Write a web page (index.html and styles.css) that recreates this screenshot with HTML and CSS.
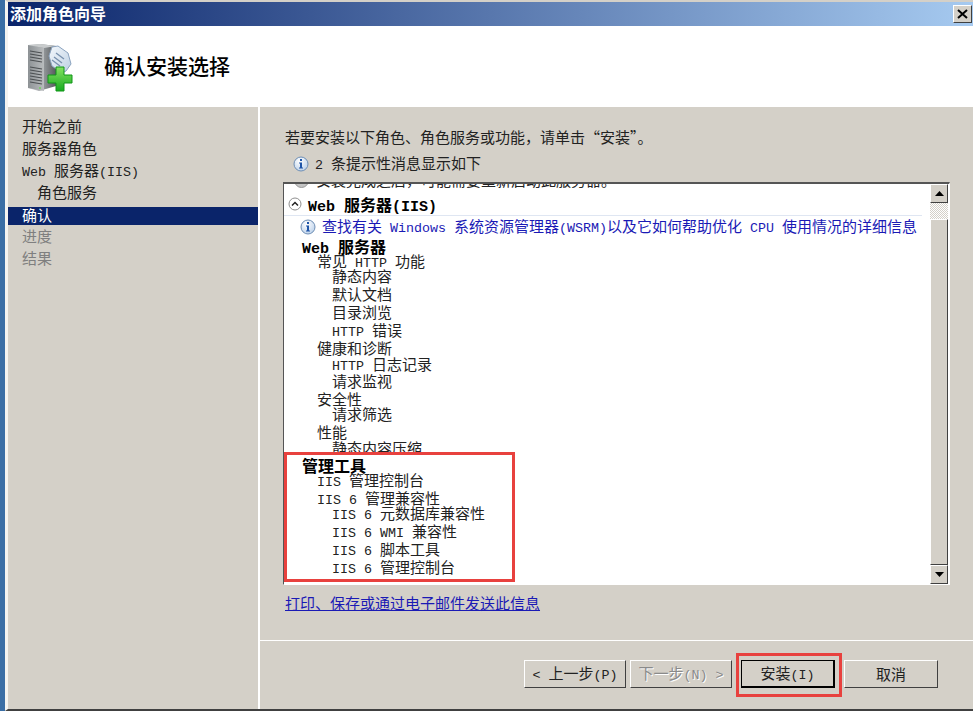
FILE: index.html
```html
<!DOCTYPE html>
<html lang="zh-CN">
<head>
<meta charset="utf-8">
<title>添加角色向导</title>
<link rel="stylesheet" href="styles.css">
</head>
<body>
<div class="window">
  <div class="titlebar">
    <span class="title-text">添加角色向导</span>
    <span class="close"><svg width="11" height="10" viewBox="0 0 11 10"><path d="M1 1l9 8M10 1l-9 8" stroke="#000" stroke-width="2" fill="none"/></svg></span>
  </div>
  <header class="head">
    <svg class="head-icon" width="48" height="50" viewBox="0 0 48 50">
      <defs>
        <linearGradient id="srv" x1="0" x2="1" y1="0" y2="0"><stop offset="0" stop-color="#8d9295"/><stop offset="1" stop-color="#b9bcbe"/></linearGradient>
        <linearGradient id="side" x1="0" x2="1" y1="0" y2="0"><stop offset="0" stop-color="#e1e3e4"/><stop offset=".5" stop-color="#9b9fa2"/><stop offset="1" stop-color="#565a5d"/></linearGradient>
        <linearGradient id="plus" x1="0" x2="0" y1="0" y2="1"><stop offset="0" stop-color="#86e262"/><stop offset="1" stop-color="#17ab1f"/></linearGradient>
        <linearGradient id="tag" x1="0" x2="1" y1="0" y2="1"><stop offset="0" stop-color="#f4f8fc"/><stop offset="1" stop-color="#bccfe3"/></linearGradient>
      </defs>
      <path d="M1 2l12-1 16 2v40l-17 5-11-3z" fill="url(#side)"/>
      <path d="M1 2l12-1 16 2-12 2z" fill="#c9cccd"/>
      <path d="M1 2l16 3v43l-16-3z" fill="url(#srv)"/>
      <path d="M3 8l12 2M3 11l12 2M3 14l12 2M3 17l12 2M3 24l12 2M3 27l12 2M3 30l12 2M3 33l12 2M3 36l12 2M3 39l12 2" stroke="#4c5053" stroke-width="1.100" fill="none"/>
      <circle cx="13" cy="45" r="1" fill="#6fcf5a"/>
      <path d="M22 13l3-9 6-1 10 7 3 11-5 7-4 2-10-7z" fill="url(#tag)" stroke="#8ba3bf"/>
      <path d="M29 10l8 6M27 14l8 6M25 17l8 6" stroke="#7890ae" stroke-width="1.300" fill="none"/>
      <path d="M21 32h8v-8h8v8h8v8h-8v8h-8v-8h-8z" fill="url(#plus)" stroke="#109619"/>
    </svg>
    <h1 class="head-title">确认安装选择</h1>
  </header>
  <div class="body">
    <nav class="steps">
      <div class="step">开始之前</div>
      <div class="step">服务器角色</div>
      <div class="step"><span class="lat">Web </span>服务器<span class="lat">(IIS)</span></div>
      <div class="step sub">角色服务</div>
      <div class="step current">确认</div>
      <div class="step off">进度</div>
      <div class="step off">结果</div>
    </nav>
    <main class="main">
      <div class="content">
        <p class="intro">若要安装以下角色、角色服务或功能，请单击“安装”。</p>
        <p class="notice"><svg class="info" width="16" height="16" viewBox="0 0 16 16"><use href="#info-g"/></svg><span><span class="lat">2 </span>条提示性消息显示如下</span></p>
        <div class="listbox">
          <div class="list">
            <div class="clip-row"><span class="clip-dot"></span><span class="clip-text">安装完成之后，可能需要重新启动此服务器。</span></div>
            <div class="sec-head">
              <svg class="chev" width="14" height="14" viewBox="0 0 14 14"><circle cx="7" cy="7" r="6" fill="#fff" stroke="#8f8f8f"/><path d="M4 8.500l3-3 3 3" fill="none" stroke="#222" stroke-width="1.500"/></svg>
              <b class="b"><span class="lat">Web </span>服务器<span class="lat">(IIS)</span></b>
            </div>
            <div class="link-row">
              <svg class="info" width="16" height="16" viewBox="0 0 16 16">
                <defs><radialGradient id="ig" cx=".4" cy=".3" r=".8"><stop offset="0" stop-color="#fff"/><stop offset="1" stop-color="#b6cde8"/></radialGradient></defs>
                <g id="info-g"><circle cx="8" cy="8" r="7" fill="url(#ig)" stroke="#6f8fb5"/><rect x="7" y="3" width="2" height="2" fill="#1f55a8"/><path d="M6 6.500h3v5h1v1h-4v-1h1v-4h-1z" fill="#1f55a8"/></g>
              </svg>
              <a class="link-blue">查找有关<span class="lat"> Windows </span>系统资源管理器<span class="lat">(WSRM)</span>以及它如何帮助优化<span class="lat"> CPU </span>使用情况的详细信息</a>
            </div>
            <div class="tree">
              <div class="n b"><span class="lat">Web </span>服务器</div>
              <div class="n l1 m3">常见<span class="lat"> HTTP </span>功能</div>
              <div class="n l2 m3">静态内容</div>
              <div class="n l2">默认文档</div>
              <div class="n l2">目录浏览</div>
              <div class="n l2"><span class="lat">HTTP </span>错误</div>
              <div class="n l1">健康和诊断</div>
              <div class="n l2 m2"><span class="lat">HTTP </span>日志记录</div>
              <div class="n l2 m1">请求监视</div>
              <div class="n l1">安全性</div>
              <div class="n l2 m3">请求筛选</div>
              <div class="n l1">性能</div>
              <div class="n l2 m2">静态内容压缩</div>
              <div class="mgmt">
                <div class="n b">管理工具</div>
                <div class="n l1 m3"><span class="lat">IIS </span>管理控制台</div>
                <div class="n l1"><span class="lat">IIS 6 </span>管理兼容性</div>
                <div class="n l2 m3"><span class="lat">IIS 6 </span>元数据库兼容性</div>
                <div class="n l2"><span class="lat">IIS 6 WMI </span>兼容性</div>
                <div class="n l2"><span class="lat">IIS 6 </span>脚本工具</div>
                <div class="n l2"><span class="lat">IIS 6 </span>管理控制台</div>
              </div>
            </div>
          </div>
          <div class="scrollbar">
            <span class="sb-btn"><svg width="9" height="5" viewBox="0 0 9 5"><path d="M4.500 0l4.500 5h-9z"/></svg></span>
            <span class="sb-track"></span>
            <span class="sb-thumb"></span>
            <span class="sb-btn"><svg width="9" height="5" viewBox="0 0 9 5"><path d="M0 0h9l-4.500 5z"/></svg></span>
          </div>
        </div>
        <a class="print-link">打印、保存或通过电子邮件发送此信息</a>
      </div>
      <footer class="foot">
        <button class="btn btn-prev"><span class="lat">&lt; </span>上一步<span class="lat">(P)</span></button>
        <button class="btn btn-next" disabled>下一步<span class="lat">(N) &gt;</span></button>
        <span class="install-wrap"><button class="btn btn-default">安装<span class="lat">(I)</span></button></span>
        <button class="btn btn-cancel">取消</button>
      </footer>
    </main>
  </div>
</div>
</body>
</html>
```
FILE: styles.css
```css
* { box-sizing: border-box; }
html, body { margin: 0; height: 711px; overflow: hidden; }
body { font-family: "Noto Sans CJK SC", sans-serif; font-size: 15px; color: #222; background: #3a6ea5; }
.lat { font-family: "Liberation Mono", monospace; font-size: 13.33px; white-space: pre; }
.window { height: 711px; margin-left: 5px; background: #d4d0c8; border-left: 3px solid #f4f3f0; border-top: 2px solid #d4d0c8; border-bottom: 2px solid #404040; display: flex; flex-direction: column; }
.titlebar { height: 24px; display: flex; align-items: center; justify-content: space-between; padding: 0 1px 0 2px; background: linear-gradient(90deg, #0a246a, #a6caf0); flex: none; }
.title-text { color: #fff; font-size: 16px; font-weight: 700; line-height: 20px; margin-bottom: 3px; }
.close { width: 19px; height: 18px; background: #d4d0c8; border: 1px solid; border-color: #fff #404040 #404040 #fff; display: flex; align-items: center; justify-content: center; }
.head { height: 81px; background: #fff; display: flex; align-items: center; flex: none; padding-left: 19px; }
.head-icon { flex: none; margin-right: 29px; margin-top: 2px; }
.head-title { margin: 0 0 3px; font-size: 21px; font-weight: 500; color: #000; }
.body { flex: 1; display: flex; min-height: 0; }
.steps { width: 250px; flex: none; padding-top: 8px; }
.step { height: 22px; line-height: 22px; padding-left: 14px; }
.step.sub { padding-left: 29px; }
.step.current { height: 18px; line-height: 16px; margin-top: 4px; background: #0a246a; color: #fff; }
.step.off { color: #7f7f7f; }
.main { flex: 1; display: flex; flex-direction: column; min-width: 0; border-left: 2px solid #fff; }
.content { flex: 1; padding: 19px 23px 0 23px; min-height: 0; }
.intro { margin: 0 0 0 2px; line-height: 22px; height: 22px; white-space: nowrap; }
.notice { margin: 5px 0 7px 10px; height: 22px; line-height: 22px; display: flex; align-items: center; gap: 6px; }
.info { flex: none; }
.listbox { display: flex; height: 403px; border: 1px solid; border-top-width: 2px; border-color: #555 #fff #fff #555; background: #fff; }
.list { flex: 1; overflow: hidden; min-width: 0; }
.clip-row { height: 5px; overflow: hidden; display: flex; gap: 7px; padding-left: 10px; }
.clip-dot { width: 15px; height: 15px; border-radius: 50%; background: #c4c4c4; border: 1px solid #999; margin-top: -11px; flex: none; }
.clip-text { margin-top: -13px; line-height: 18px; white-space: nowrap; flex: none; height: 18px; }
.sec-head { height: 27px; display: flex; align-items: center; gap: 6px; padding: 3px 0 0 4px; border-bottom: 1px solid #dfe6f2; margin-right: 8px; }
.b { font-size: 16px; font-weight: 700; color: #000; }
.b .lat { font-size: 15px; }
.link-row { display: flex; align-items: center; height: 19px; margin-top: 1px; padding-left: 16px; gap: 6px; }
.link-blue { color: #1a1ab5; white-space: nowrap; line-height: 19px; }
.tree { padding-left: 18px; padding-top: 1px; }
.n { white-space: nowrap; height: 18px; line-height: 18px; }
.l1 { padding-left: 15px; }
.l2 { padding-left: 30px; }
.m1 { margin-top: -1px; }
.m2 { margin-top: -2px; }
.m3 { margin-top: -3px; }
.mgmt { position: relative; margin: -5px 0 0 -18px; width: 231px; background: #fff; border: 3px solid #e8413e; padding: 1px 0 3px 15px; }
.scrollbar { width: 18px; flex: none; display: flex; flex-direction: column; margin-right: 1px; background: #d4d0c8; }
.sb-btn { height: 19px; flex: none; display: flex; align-items: center; justify-content: center; border: 1px solid; border-color: #fff #404040 #404040 #fff; background: #d4d0c8; }
.sb-track { height: 16px; flex: none; background: repeating-conic-gradient(#d4d0c8 0 25%, #fff 0 50%) 0 0 / 2px 2px; }
.sb-thumb { flex: 1; border: 1px solid; border-color: #fff #404040 #404040 #fff; background: #d4d0c8; }
.print-link { display: inline-block; margin: 9px 0 0 2px; color: #1a1ab5; text-decoration: underline; line-height: 18px; }
.foot { height: 69px; flex: none; border-top: 1px solid #fff; display: flex; align-items: flex-start; padding: 19px 0 0 264px; }
.btn { width: 102px; height: 28px; font-family: "Noto Sans CJK SC", sans-serif; font-size: 15px; line-height: 24px; color: #222; background: #d4d0c8; border: 1px solid; border-color: #fff #404040 #404040 #fff; padding: 0; }
.btn-prev { margin-right: 4px; }
.btn-next { margin-right: 4px; color: #8a8a8a; text-shadow: 1px 1px 0 #fff; }
.install-wrap { display: block; border: 3px solid #e8413e; padding: 4px 2px; height: 44px; width: 106px; margin-top: -7px; margin-right: 2px; }
.btn-default { width: 94px; border: 1px solid #000; border-right-width: 2px; border-bottom-width: 2px; }
.btn-cancel { width: 94px; }
```
